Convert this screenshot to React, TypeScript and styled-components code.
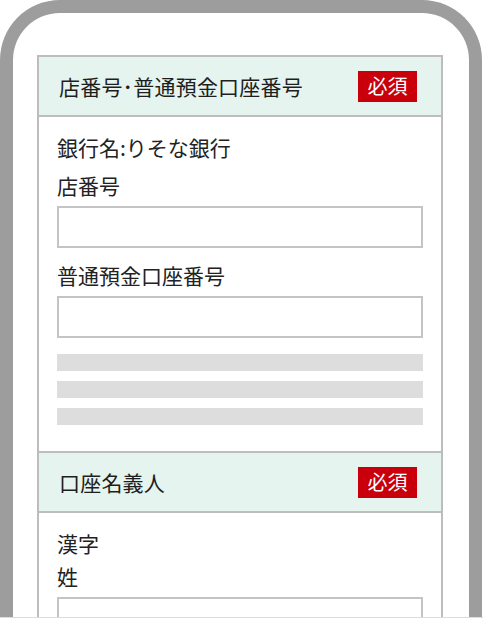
import React from "react";
import styled, { createGlobalStyle } from "styled-components";

const GlobalStyle = createGlobalStyle`
  html, body {
    margin: 0;
    padding: 0;
    background: #ffffff;
  }
  body {
    font-family: "Noto Sans CJK JP", "Noto Sans", sans-serif;
    color: #222222;
  }
`;

const colors = {
  frame: "#9d9d9d",
  line: "#bdbdbd",
  inputLine: "#c4c4c4",
  head: "#e5f4ef",
  badge: "#c9000b",
  bar: "#dcdddc",
};

const Viewport = styled.div`
  width: 483px;
  height: 617px;
  overflow: hidden;
  border-bottom: 1px solid #dcdcdc;
`;

const PhoneFrame = styled.div`
  box-sizing: border-box;
  width: 482px;
  min-height: 700px;
  border: 13px solid ${colors.frame};
  border-bottom: none;
  border-radius: 60px 60px 0 0;
  padding: 42px 0 0 24px;
`;

const Card = styled.div`
  box-sizing: border-box;
  width: 406px;
  border: 2px solid ${colors.line};
  border-bottom: none;
`;

const SectionHead = styled.div<{ $first?: boolean }>`
  box-sizing: border-box;
  height: ${(p) => (p.$first ? "60px" : "62px")};
  display: flex;
  align-items: center;
  justify-content: space-between;
  padding: 0 24px 0 20px;
  background: ${colors.head};
  border-top: ${(p) => (p.$first ? "none" : `2px solid ${colors.line}`)};
  border-bottom: 2px solid ${colors.line};
`;

const HeadTitle = styled.span`
  font-size: 21px;
  line-height: 1;
  letter-spacing: 0.2px;
  color: #1e1e1e;
`;

const Badge = styled.span`
  width: 59px;
  height: 31px;
  display: flex;
  align-items: center;
  justify-content: center;
  background: ${colors.badge};
  color: #ffffff;
  font-size: 20px;
  line-height: 1;
`;

const SectionBody = styled.div`
  padding: 11px 18px 26px 18px;
`;

const Note = styled.div<{ $compact?: boolean }>`
  font-size: 21px;
  line-height: ${(p) => (p.$compact ? "28px" : "38px")};
  margin-top: ${(p) => (p.$compact ? "5px" : "0")};
`;

const FieldLabel = styled.div`
  font-size: 21px;
  line-height: 38px;
  margin-bottom: 2px;
`;

const TextInput = styled.input`
  display: block;
  box-sizing: border-box;
  width: 100%;
  height: 42px;
  margin: 0 0 8px 0;
  padding: 0 10px;
  border: 2px solid ${colors.inputLine};
  border-radius: 0;
  background: #ffffff;
  font-family: inherit;
  font-size: 18px;
  outline: none;
`;

const Placeholder = styled.div`
  display: flex;
  flex-direction: column;
  gap: 10px;
  margin-top: 16px;
`;

const Bar = styled.div`
  height: 17px;
  background: ${colors.bar};
`;

export default function App() {
  return (
    <>
      <GlobalStyle />
      <Viewport>
        <PhoneFrame>
          <Card>
            <SectionHead $first>
              <HeadTitle>店番号･普通預金口座番号</HeadTitle>
              <Badge>必須</Badge>
            </SectionHead>
            <SectionBody>
              <Note>銀行名:りそな銀行</Note>
              <FieldLabel>店番号</FieldLabel>
              <TextInput type="text" aria-label="店番号" />
              <FieldLabel>普通預金口座番号</FieldLabel>
              <TextInput type="text" aria-label="普通預金口座番号" />
              <Placeholder>
                <Bar />
                <Bar />
                <Bar />
              </Placeholder>
            </SectionBody>
            <SectionHead>
              <HeadTitle>口座名義人</HeadTitle>
              <Badge>必須</Badge>
            </SectionHead>
            <SectionBody>
              <Note $compact>漢字</Note>
              <FieldLabel>姓</FieldLabel>
              <TextInput type="text" aria-label="姓" />
            </SectionBody>
          </Card>
        </PhoneFrame>
      </Viewport>
    </>
  );
}
